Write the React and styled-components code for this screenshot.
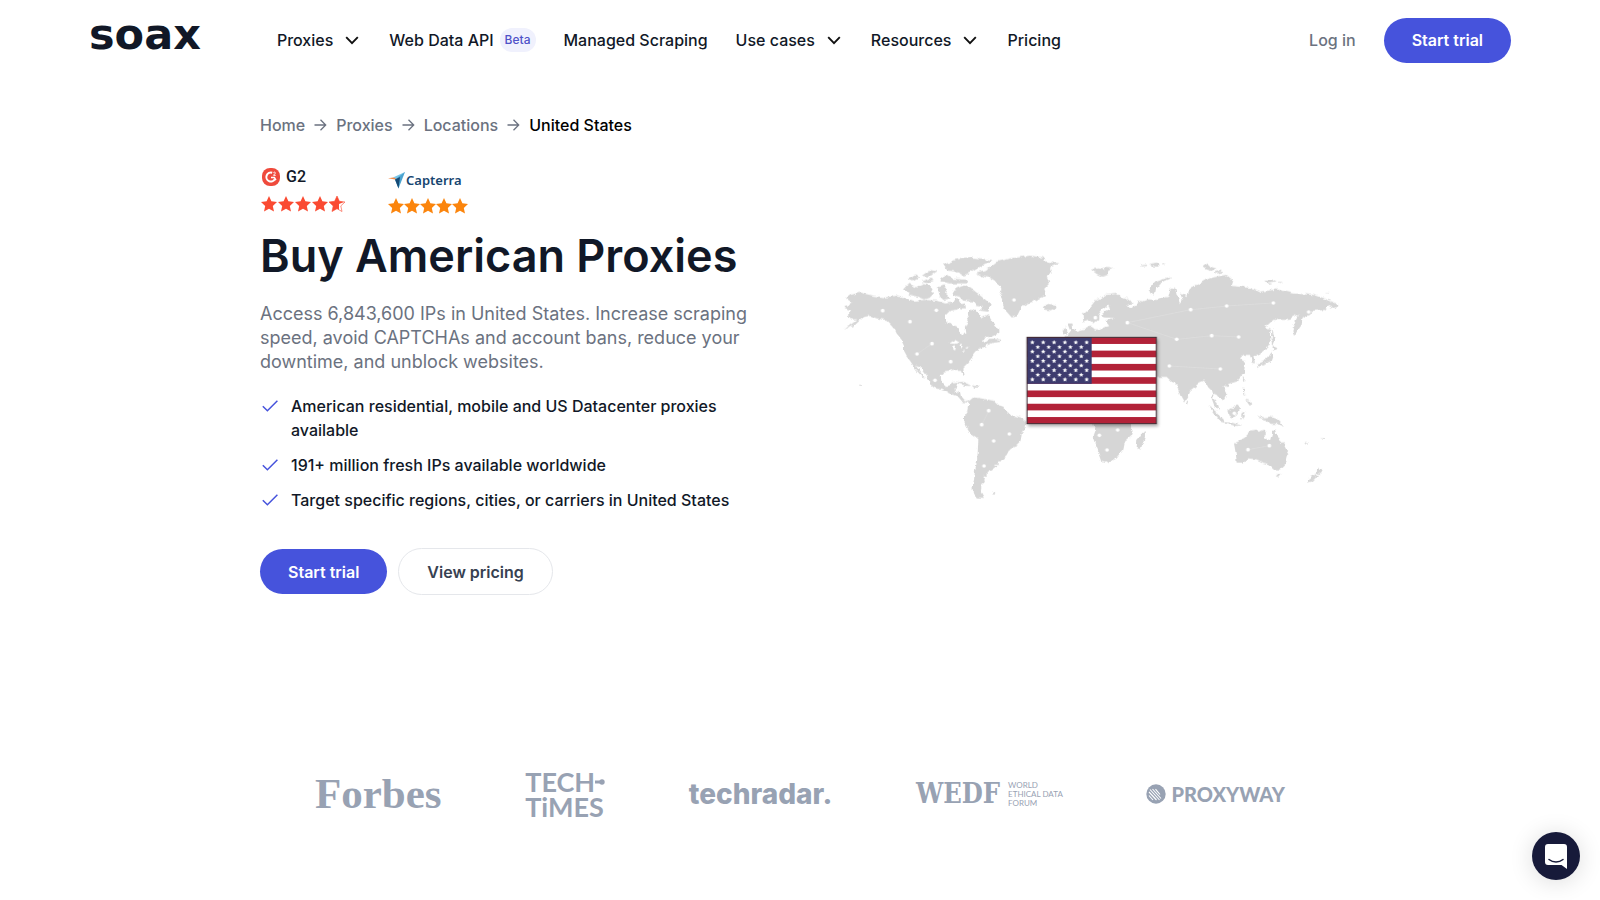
import React from "react";
import styled, { createGlobalStyle } from "styled-components";

const navItems = [
  { label: "Proxies", menu: true },
  { label: "Web Data API", badge: "Beta" },
  { label: "Managed Scraping" },
  { label: "Use cases", menu: true },
  { label: "Resources", menu: true },
  { label: "Pricing" },
];

const crumbs = ["Home", "Proxies", "Locations"];

const features = [
  "American residential, mobile and US Datacenter proxies available",
  "191+ million fresh IPs available worldwide",
  "Target specific regions, cities, or carriers in United States",
];

const west = [
  // north america
  "M48,175 62,165 90,158 130,167 165,172 205,166 230,175 250,182 285,180 320,182 345,190 370,188 380,170 395,196 385,208 360,212 345,228 345,245 365,255 385,262 395,285 406,280 404,265 416,240 410,222 420,206 432,208 445,220 455,235 475,225 490,250 505,268 505,280 485,290 470,292 455,300 465,308 482,296 512,298 514,306 490,308 470,316 450,325 440,330 430,342 425,357 415,370 400,385 404,408 400,410 393,390 370,390 345,394 332,408 335,430 345,441 358,440 365,428 383,425 378,444 370,454 393,458 396,474 405,484 418,480 416,488 395,486 380,468 355,460 335,450 315,443 300,430 290,410 270,382 258,378 285,415 280,414 258,390 240,362 230,350 222,335 222,315 215,300 200,280 190,260 170,240 140,235 120,228 100,232 75,255 42,269 70,248 82,238 65,238 53,225 65,212 44,204 45,198 68,190z",
  // arctic islands
  "M218,150 235,132 262,142 280,132 300,138 312,160 300,172 282,178 262,170 240,165z",
  "M368,150 400,137 430,150 455,170 482,192 474,215 450,212 455,200 440,198 430,185 400,182 388,170 372,166z",
  "M340,75 380,58 430,53 488,60 465,75 440,85 420,98 400,106 378,95 352,92z",
  "M320,142 340,136 352,145 345,158 362,175 340,180 325,165z",
  "M232,118 258,106 268,112 246,124z",
  "M275,108 300,90 320,94 300,110z",
  "M330,112 350,104 368,116 415,120 410,130 360,130 335,124z",
  "M275,124 300,116 312,122 290,130z",
  "M384,195 405,190 408,208 392,208z",
  // greenland, iceland, british isles
  "M438,98 470,88 500,65 540,55 600,47 640,52 650,65 688,70 660,82 665,100 650,110 658,130 640,150 645,165 620,180 595,190 575,200 560,230 545,232 525,210 515,185 520,175 508,155 515,150 500,125 480,114 455,108z",
  "M638,198 655,192 676,194 680,203 665,211 646,209z",
  "M712,250 724,250 728,264 744,278 738,288 714,290 722,276z",
  "M698,268 710,264 712,278 700,283z",
  // caribbean
  "M375,428 400,426 425,438 410,438z",
  "M430,438 450,438 444,443 432,443z",
  // south america
  "M416,484 430,472 445,474 470,478 490,482 500,492 520,500 530,515 545,525 575,533 590,546 587,565 575,580 572,605 560,618 540,625 530,645 515,660 505,672 492,672 500,680 488,690 470,695 470,705 460,712 465,725 455,735 452,755 462,774 440,772 428,755 428,735 432,720 435,690 440,670 443,640 445,600 425,585 410,560 402,540 402,525 412,510z",
  "M486,756 496,755 494,760 488,760z",
  "M88,435 93,435 93,440 88,440z",
];

const east = [
  // eurasia
  "M8,225 30,205 50,180 80,165 110,162 150,180 158,190 142,195 150,205 168,196 172,182 190,184 205,178 230,180 265,170 270,150 285,142 290,165 300,190 308,180 300,158 320,168 325,145 350,135 370,122 400,112 440,105 460,122 455,138 480,140 520,145 540,155 590,148 640,160 700,165 740,178 776,193 765,208 745,196 735,210 700,212 690,225 668,232 665,255 642,288 637,270 645,245 657,222 640,230 625,240 580,240 555,262 570,270 575,300 560,325 540,340 520,350 525,370 515,368 510,345 490,345 480,355 495,365 492,400 470,425 445,432 430,440 442,460 432,480 422,480 410,465 400,460 400,475 414,492 418,508 405,502 395,475 395,455 385,445 372,422 358,428 345,440 330,452 324,470 312,487 300,465 292,440 288,430 275,425 260,411 232,411 0,410 -30,300 -48,290 -20,275 20,265 30,260 38,262 45,268 60,268 75,262 88,258 75,242 90,238 106,235 75,232 62,225 90,205 84,196 66,210 55,225 55,240 42,250 32,240 10,247z",
  // africa, madagascar
  "M38,545 155,545 158,585 135,605 130,630 110,655 90,665 68,668 60,645 45,610 38,590 45,570z",
  "M172,596 185,582 194,573 195,590 182,628 170,624z",
  "M321,482 327,486 324,494 319,490z",
  // indonesia and philippines
  "M385,498 400,508 425,530 432,546 418,542 400,520z",
  "M432,546 455,548 487,556 470,558 436,551z",
  "M442,514 462,500 472,496 480,504 472,524 460,534 446,528z",
  "M484,520 500,514 488,524 496,538 488,532 484,540z",
  "M488,440 495,446 492,460 500,466 490,462z",
  "M496,480 510,482 514,490 506,494z",
  "M434,432 446,430 444,440 437,441z",
  "M488,416 495,412 492,426z",
  "M533,528 552,532 570,530 594,540 612,560 590,552 572,552 560,540 540,534z",
  // australia, new zealand
  "M462,610 474,605 495,592 510,575 530,572 540,575 550,570 560,575 552,590 570,602 578,572 585,572 592,595 612,615 625,640 618,670 600,688 580,688 565,672 550,668 530,658 505,655 490,668 470,668 468,645z",
  "M590,703 605,703 598,713z",
  "M712,678 718,690 727,688 720,702 710,700z",
  "M708,702 684,720 684,727 697,724 714,706z",
  // japan, sakhalin
  "M576,320 593,324 580,332z",
  "M575,336 577,350 572,364 545,374 532,384 530,374 555,362 566,350z",
  "M577,266 582,290 586,300 580,318 576,300z",
  // northern islands
  "M205,155 222,128 270,110 272,115 240,130 225,148 222,166z",
  "M34,90 52,85 70,88 68,80 100,82 84,90 86,104 66,110 50,102z",
  "M368,80 384,70 392,80 410,86 398,94 380,88z",
  "M404,96 424,92 426,98 408,101z",
  "M180,76 200,74 202,78 182,79z",
  "M208,72 232,68 236,80 216,79z",
  "M242,73 256,71 256,76z",
  "M556,122 580,122 590,127 566,131z",
  "M596,125 613,127 600,129z",
  "M735,157 746,157 742,160z",
  "M674,606 684,608 680,613z",
  "M724,592 736,593 730,597z",
];

const pins = [
  [158, 212], [240, 245], [319, 211], [306, 311], [261, 342], [362, 365],
  [315, 421], [552, 180], [476, 512], [455, 554], [538, 582], [491, 603],
  [462, 678], [796, 233], [892, 248], [1082, 209], [1190, 198], [1330, 189],
  [1436, 216], [1040, 298], [1145, 287], [1226, 291], [1018, 378],
  [1171, 387], [808, 586], [863, 570], [831, 630], [1213, 520],
  [1254, 629], [1318, 617],
];

const starPath = "M8,0 10.4,5.3 16,6 11.8,9.9 13,15.5 8,12.7 3,15.5 4.2,9.9 0,6 5.6,5.3z";

const Chevron = () => (
  <svg width="16" height="9" viewBox="0 0 16 9" fill="none" aria-hidden="true">
    <path d="M1.2 1.2 7 7.2l5.8-6" stroke="#101010" strokeWidth="1.9" />
  </svg>
);

const Arrow = () => (
  <svg width="13" height="12" viewBox="0 0 13 12" fill="none" aria-hidden="true">
    <path d="M.5 6h11M6.5 .8 11.7 6 6.5 11.2" stroke="#6b7280" strokeWidth="1.3" />
  </svg>
);

const Check = () => (
  <svg width="16" height="12" viewBox="0 0 16 12" fill="none" aria-hidden="true">
    <path d="m.8 6.2 4.6 4.6L15.4.8" stroke="#4653dc" strokeWidth="1.5" />
  </svg>
);

const Stars = ({ color, pitch, partial }) => (
  <svg width={pitch * 4 + 16} height="16" aria-hidden="true">
    {[0, 1, 2, 3, 4].map((i) => (
      <g key={i} transform={`translate(${i * pitch} 0)`}>
        {partial && i === 4 ? (
          <>
            <path d={starPath} fill="#fff" stroke={color} strokeWidth="0.6" />
            <path d="M8,0 10.4,5.3 15,6 10,8 10,13.8 8,12.7 3,15.5 4.2,9.9 0,6 5.6,5.3z" fill={color} />
          </>
        ) : (
          <path d={starPath} fill={color} />
        )}
      </g>
    ))}
  </svg>
);

const flagStars = [];
for (let row = 0; row < 9; row++) {
  const count = row % 2 ? 5 : 6;
  for (let col = 0; col < count; col++) {
    flagStars.push([607 + col * 32.6 + (row % 2 ? 16.3 : 0), 307 + row * 13.9]);
  }
}

const WorldMap = () => (
  <MapDrawing viewBox="30 0 1500 810" role="img" aria-label="World map with the flag of the United States">
    <defs>
      <filter id="coast" x="0" y="0" width="1560" height="810" filterUnits="userSpaceOnUse">
        <feTurbulence type="fractalNoise" baseFrequency="0.06" numOctaves="3" seed="4" />
        <feDisplacementMap in="SourceGraphic" scale="14" xChannelSelector="R" yChannelSelector="G" />
      </filter>
      <filter id="flagShadow" x="-10%" y="-10%" width="120%" height="125%">
        <feDropShadow dx="4" dy="7" stdDeviation="5" floodColor="#000" floodOpacity="0.3" />
      </filter>
    </defs>
    <g fill="#d6d6d6" filter="url(#coast)">
      {west.map((d) => (
        <path key={d} d={d} />
      ))}
      <g transform="translate(750 0)">
        {east.map((d) => (
          <path key={d} d={d} />
        ))}
      </g>
      <path fill="#fff" d="M358,310 375,300 390,308 376,312z M370,318 378,316 376,334 370,332z M388,316 396,314 392,326z M394,334 408,328 404,334z M404,324 416,320 412,326z" />
    </g>
    <path
      d="M892,248 1082,209M1082,209 1190,198 1330,189M1040,298 1145,287 1226,291M1018,378 1171,387M892,248 1040,298M1254,629 1318,617M306,311 261,342M476,512 455,554"
      fill="none"
      stroke="#e2e2e2"
      strokeWidth="1.5"
    />
    {pins.map(([x, y]) => (
      <circle key={`${x}-${y}`} cx={x} cy={y} r="5.5" fill="#fff" />
    ))}
    <g filter="url(#flagShadow)">
      <rect x="591" y="292" width="388" height="259" fill="#fff" />
      {[0, 1, 2, 3, 4, 5, 6].map((i) => (
        <rect key={i} x="591" y={292 + i * 39.85} width="388" height="19.9" fill="#b22339" />
      ))}
      <rect x="591" y="292" width="194" height="139.5" fill="#3c3b6e" />
      {flagStars.map(([x, y]) => (
        <path
          key={`${x}-${y}`}
          d={starPath}
          fill="#fff"
          transform={`translate(${x - 6.8} ${y - 7}) scale(0.85)`}
        />
      ))}
      <rect x="591" y="292" width="388" height="259" fill="none" stroke="#3b2630" strokeWidth="3" />
    </g>
  </MapDrawing>
);

const App = () => {
  return (
    <>
      <GlobalStyle />
      <Header>
        <Logo href="#">soax</Logo>
        <Nav>
          {navItems.map((item) => (
            <NavLink key={item.label} href="#" $wide={item.menu}>
              {item.label}
              {item.menu && <Chevron />}
              {item.badge && <Badge>{item.badge}</Badge>}
            </NavLink>
          ))}
        </Nav>
        <Account>
          <LoginLink href="#">Log in</LoginLink>
          <Button>Start trial</Button>
        </Account>
      </Header>

      <Main>
        <Breadcrumbs aria-label="Breadcrumb">
          {crumbs.map((crumb) => (
            <React.Fragment key={crumb}>
              <Crumb href="#">{crumb}</Crumb>
              <Arrow />
            </React.Fragment>
          ))}
          <CurrentCrumb>United States</CurrentCrumb>
        </Breadcrumbs>

        <Hero>
          <div>
            <Ratings>
              <Rating>
                <RatingName>
                  <svg width="20" height="20" viewBox="0 0 20 20" aria-hidden="true">
                    <rect x="1" y="1" width="18" height="18" rx="8" fill="#ef4a3c" />
                    <path d="M11.2 5.7a4.5 4.5 0 1 0 2.6 6.5" fill="none" stroke="#fff" strokeWidth="2" />
                    <path d="M10 10.6h3.4l1.5 2.6" fill="none" stroke="#fff" strokeWidth="1.5" />
                    <path d="M12.4 5.7c.5-1 2.2-.7 1.9.5-.2.8-1.5 1.1-1.8 2.1h2.2" fill="none" stroke="#fff" strokeWidth="1" />
                  </svg>
                  <G2Name>G2</G2Name>
                </RatingName>
                <Stars color="#fa4a32" pitch={17} partial />
              </Rating>
              <Rating $low>
                <RatingName $tight>
                  <svg width="17" height="17" viewBox="0 0 17 17" aria-hidden="true">
                    <path d="M0 6.2 10.4 4.8 7 7.6z" fill="#f28b4b" />
                    <path d="M5 5.5 17 0 11 7.4z" fill="#7cc7e8" />
                    <path d="M7 7.4 17 0 10.5 16.6z" fill="#4ba3cf" />
                    <path d="M7 7.4 12 5 10.5 16.6z" fill="#154a75" />
                  </svg>
                  <CapterraName>Capterra</CapterraName>
                </RatingName>
                <Stars color="#fb850d" pitch={16} />
              </Rating>
            </Ratings>
            <Title>Buy American Proxies</Title>
            <Lead>
              Access 6,843,600 IPs in United States. Increase scraping speed, avoid CAPTCHAs and
              account bans, reduce your downtime, and unblock websites.
            </Lead>
            <Features>
              {features.map((feature) => (
                <Feature key={feature}>
                  <CheckBox>
                    <Check />
                  </CheckBox>
                  {feature}
                </Feature>
              ))}
            </Features>
            <Actions>
              <Button>Start trial</Button>
              <OutlineButton>View pricing</OutlineButton>
            </Actions>
          </div>
          <WorldMap />
        </Hero>

        <Press>
          <Forbes>Forbes</Forbes>
          <TechTimes>
            <TechTop>
              TECH
              <svg width="10" height="28" viewBox="0 0 10 28" aria-hidden="true">
                <path d="M0 14h7" stroke="currentColor" strokeWidth="3" />
                <circle cx="7" cy="14" r="2.7" fill="currentColor" />
              </svg>
            </TechTop>
            <span>TiMES</span>
          </TechTimes>
          <TechRadar>techradar.</TechRadar>
          <Wedf>
            <WedfName>WEDF</WedfName>
            <WedfText>
              <span>WORLD</span>
              <span>ETHICAL DATA</span>
              <span>FORUM</span>
            </WedfText>
          </Wedf>
          <Proxyway>
            <svg width="20" height="20" viewBox="0 0 20 20" aria-hidden="true">
              <circle cx="10" cy="10" r="9.7" fill="currentColor" />
              <path
                d="M4 5.5 13.5 16M6.5 5 15 14.5M9.5 5.2 14 10.5M3 8 10.5 16M3 11.5 7 16"
                stroke="#fff"
                strokeWidth="1.1"
              />
            </svg>
            PROXYWAY
          </Proxyway>
        </Press>
      </Main>

      <ChatButton aria-label="Open chat">
        <svg width="22" height="25" viewBox="0 0 22 25" fill="none" aria-hidden="true">
          <path d="M3 0h16a3 3 0 0 1 3 3v22l-5.5-4H3a3 3 0 0 1-3-3V3a3 3 0 0 1 3-3z" fill="#fff" />
          <path d="M4 15.5c4 3.2 10 3.2 14 0" stroke="#171a3a" strokeWidth="1.5" strokeLinecap="round" />
        </svg>
      </ChatButton>
    </>
  );
};

const GlobalStyle = createGlobalStyle`
  body {
    margin: 0;
    background-color: #fff;
    color: #111827;
    font-family: Inter, "Liberation Sans", sans-serif;
    font-size: 16px;
    line-height: 24px;
  }

  a {
    color: inherit;
    text-decoration: none;
  }
`;

const Header = styled.header`
  display: flex;
  align-items: center;
  max-width: 1422px;
  height: 80px;
  margin: 0 auto;
`;

const Logo = styled.a`
  font-family: "DejaVu Sans", sans-serif;
  font-size: 43px;
  font-weight: bold;
  line-height: 40px;
  padding-bottom: 12px;
`;

const Nav = styled.nav`
  display: flex;
  align-items: center;
  gap: 28px;
  margin-left: 76px;
`;

const NavLink = styled.a`
  display: flex;
  align-items: center;
  gap: ${({ $wide }) => ($wide ? "12px" : "6px")};
  font-size: 16px;
  font-weight: 500;
  white-space: nowrap;
`;

const Badge = styled.span`
  padding: 0 5px;
  border-radius: 12px;
  background-color: #f0f1fd;
  color: #4f52c8;
  font-size: 12px;
`;

const Account = styled.div`
  display: flex;
  align-items: center;
  gap: 28px;
  margin-left: auto;
`;

const LoginLink = styled.a`
  color: #6b7280;
  font-weight: 500;
`;

const Button = styled.button`
  height: 45px;
  padding: 0 28px;
  border: none;
  border-radius: 24px;
  background-color: #4653dc;
  color: white;
  font-family: inherit;
  font-size: 16px;
  font-weight: 600;
  white-space: nowrap;
  cursor: pointer;
`;

const OutlineButton = styled(Button)`
  height: 47px;
  border: 1px solid #e5e7eb;
  background-color: white;
  color: #374151;
`;

const Main = styled.main`
  max-width: 1080px;
  margin: 0 auto;
  padding-top: 33px;
`;

const Breadcrumbs = styled.nav`
  display: flex;
  align-items: center;
  gap: 9px;
  font-weight: 500;
`;

const Crumb = styled.a`
  color: #6b7280;
`;

const CurrentCrumb = styled.span`
  color: #000;
`;

const Hero = styled.section`
  display: grid;
  grid-template-columns: minmax(0, 1fr) minmax(0, 1fr);
  align-items: center;
  gap: 80px;
  padding-top: 30px;
`;

const Ratings = styled.div`
  display: flex;
  gap: 43px;
`;

const Rating = styled.div`
  display: flex;
  flex-direction: column;
  gap: ${({ $low }) => ($low ? "8px" : "9px")};
  padding: ${({ $low }) => ($low ? "3px 0 0" : "0 0 0 1px")};
`;

const RatingName = styled.div`
  display: flex;
  align-items: center;
  gap: ${({ $tight }) => ($tight ? "1px" : "5px")};
  height: 20px;
`;

const G2Name = styled.span`
  font-family: Roboto, sans-serif;
  font-size: 16px;
  font-weight: 500;
`;

const CapterraName = styled.span`
  color: #17456f;
  font-family: "Noto Sans", sans-serif;
  font-size: 13px;
  font-weight: 600;
`;

const Title = styled.h1`
  margin: 12px 0 16px;
  font-size: 45px;
  font-weight: 600;
  line-height: 60px;
`;

const Lead = styled.p`
  margin: 0 0 20px;
  color: #6b7280;
  font-size: 18px;
`;

const Features = styled.ul`
  display: flex;
  flex-direction: column;
  gap: 11px;
  margin: 0 0 36px;
  padding: 0;
  list-style: none;
`;

const Feature = styled.li`
  display: flex;
  gap: 13px;
  font-weight: 500;
`;

const CheckBox = styled.span`
  flex: none;
  padding-left: 2px;
`;

const Actions = styled.div`
  display: flex;
  align-items: center;
  gap: 11px;
`;

const MapDrawing = styled.svg`
  display: block;
  width: 100%;
  padding-bottom: 12px;
`;

const Press = styled.section`
  display: flex;
  align-items: center;
  justify-content: space-between;
  padding: 172px 55px 40px;
  color: #98a2b3;
`;

const Forbes = styled.span`
  font-family: "Liberation Serif", serif;
  font-size: 43px;
  font-weight: bold;
  line-height: 54px;
`;

const TechTimes = styled.div`
  display: flex;
  flex-direction: column;
  font-family: Lato, sans-serif;
  font-size: 27px;
  font-weight: bold;
  line-height: 25px;
`;

const TechTop = styled.span`
  display: flex;
  align-items: center;
  height: 25px;
`;

const TechRadar = styled.span`
  font-size: 28px;
  font-weight: 800;
`;

const Wedf = styled.div`
  display: flex;
  align-items: center;
  gap: 8px;
`;

const WedfName = styled.span`
  font-family: "DejaVu Serif Condensed", "DejaVu Serif", serif;
  font-size: 27px;
  font-weight: bold;
`;

const WedfText = styled.span`
  display: flex;
  flex-direction: column;
  font-family: Lato, sans-serif;
  font-size: 8px;
  line-height: 9px;
`;

const Proxyway = styled.div`
  display: flex;
  align-items: center;
  gap: 5px;
  font-family: Lato, sans-serif;
  font-size: 20px;
  font-weight: 900;
`;

const ChatButton = styled.button`
  position: fixed;
  right: 20px;
  bottom: 20px;
  display: flex;
  align-items: center;
  justify-content: center;
  width: 48px;
  height: 48px;
  padding: 0;
  border: none;
  border-radius: 50%;
  background-color: #171a3a;
  box-shadow: 0 2px 24px rgba(0, 0, 0, 0.14);
  cursor: pointer;
`;

export default App;
